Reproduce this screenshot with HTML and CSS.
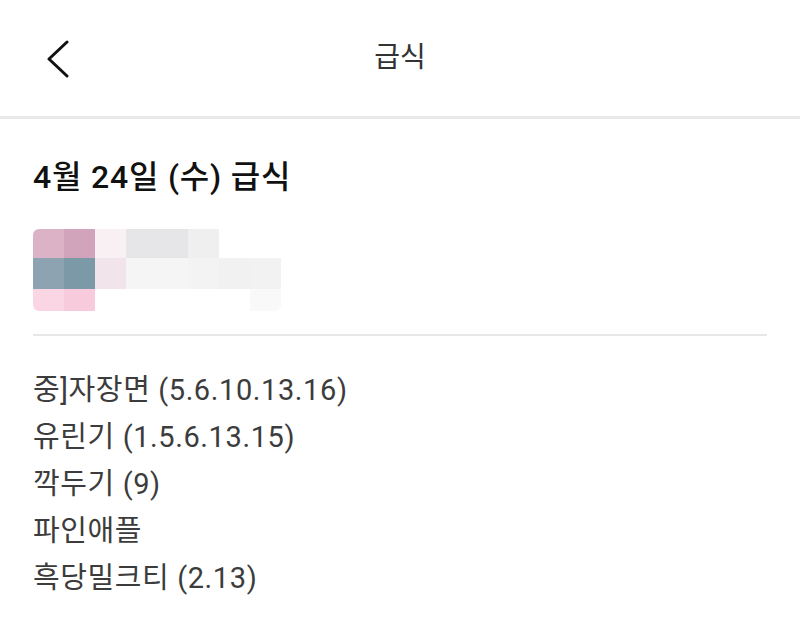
FILE: index.html
```html
<!DOCTYPE html>
<html lang="ko">

<head>
    <meta charset="UTF-8">
    <meta name="viewport" content="width=device-width, initial-scale=1.0">
    <title>급식</title>
    <link rel="stylesheet" href="styles.css">
</head>

<body>

    <div class="topbar">
        <a class="back" href="#">
            <svg width="24" height="40" viewBox="0 0 24 40">
                <path d="M20 3 L2 20 L20 37" fill="none" stroke="#111" stroke-width="3" stroke-linecap="round" stroke-linejoin="round" />
            </svg>
        </a>
        <div class="title">급식</div>
    </div>

    <div class="content">
        <h1 class="date">4월 24일 (수) 급식</h1>

        <!-- school photo, pixelated -->
        <div class="mosaic">
            <div class="cell" style="background:#dcb2c7"></div>
            <div class="cell" style="background:#d1a4bb"></div>
            <div class="cell" style="background:#f9f0f4"></div>
            <div class="cell" style="background:#e6e6e8"></div>
            <div class="cell" style="background:#e6e6e8"></div>
            <div class="cell" style="background:#efefef"></div>
            <div class="cell"></div>
            <div class="cell"></div>

            <div class="cell" style="background:#8ea3b1"></div>
            <div class="cell" style="background:#7c99a8"></div>
            <div class="cell" style="background:#f1e4eb"></div>
            <div class="cell" style="background:#f5f5f6"></div>
            <div class="cell" style="background:#f5f5f6"></div>
            <div class="cell" style="background:#f3f3f4"></div>
            <div class="cell" style="background:#f1f1f1"></div>
            <div class="cell" style="background:#f2f2f2"></div>

            <div class="cell" style="background:#fad6e4"></div>
            <div class="cell" style="background:#f8cbdc"></div>
            <div class="cell"></div>
            <div class="cell"></div>
            <div class="cell"></div>
            <div class="cell"></div>
            <div class="cell"></div>
            <div class="cell" style="background:#f9f9f9"></div>
        </div>

        <hr class="line">

        <ul class="menu">
            <li>중]자장면 (5.6.10.13.16)</li>
            <li>유린기 (1.5.6.13.15)</li>
            <li>깍두기 (9)</li>
            <li>파인애플</li>
            <li>흑당밀크티 (2.13)</li>
        </ul>
    </div>

</body>

</html>
```

FILE: styles.css
```css
body {
    margin: 0;
    background-color: #fff;
    font-family: Roboto, "Noto Sans CJK KR", sans-serif;
    color: #111;
}

.topbar {
    position: relative;
    display: flex;
    align-items: center;
    justify-content: center;
    height: 116px;
    border-bottom: 3px solid #e9e9e9;
}

.back {
    position: absolute;
    left: 47px;
    top: 39px;
    display: block;
    line-height: 0;
}

.title {
    font-size: 28px;
    line-height: 40px;
    color: #333;
}

.content {
    padding: 0 33px;
}

.date {
    margin: 0;
    padding-top: 32px;
    font-size: 32px;
    font-weight: 500;
    line-height: 52px;
    letter-spacing: 0.8px;
    color: #111;
}

.mosaic {
    display: grid;
    grid-template-columns: repeat(8, 31px);
    grid-template-rows: 29px 31px 22px;
    margin-top: 26px;
    width: 248px;
    border-radius: 6px 0 6px 6px;
    overflow: hidden;
    filter: blur(0.6px);
}

.line {
    margin: 23px 0 0;
    border: none;
    height: 2px;
    background-color: #e7e7e7;
}

.menu {
    list-style: none;
    margin: 0;
    padding: 31px 0 0;
}

.menu li {
    font-size: 29px;
    line-height: 47px;
    letter-spacing: 0.6px;
    color: #3c3c3c;
}
```
